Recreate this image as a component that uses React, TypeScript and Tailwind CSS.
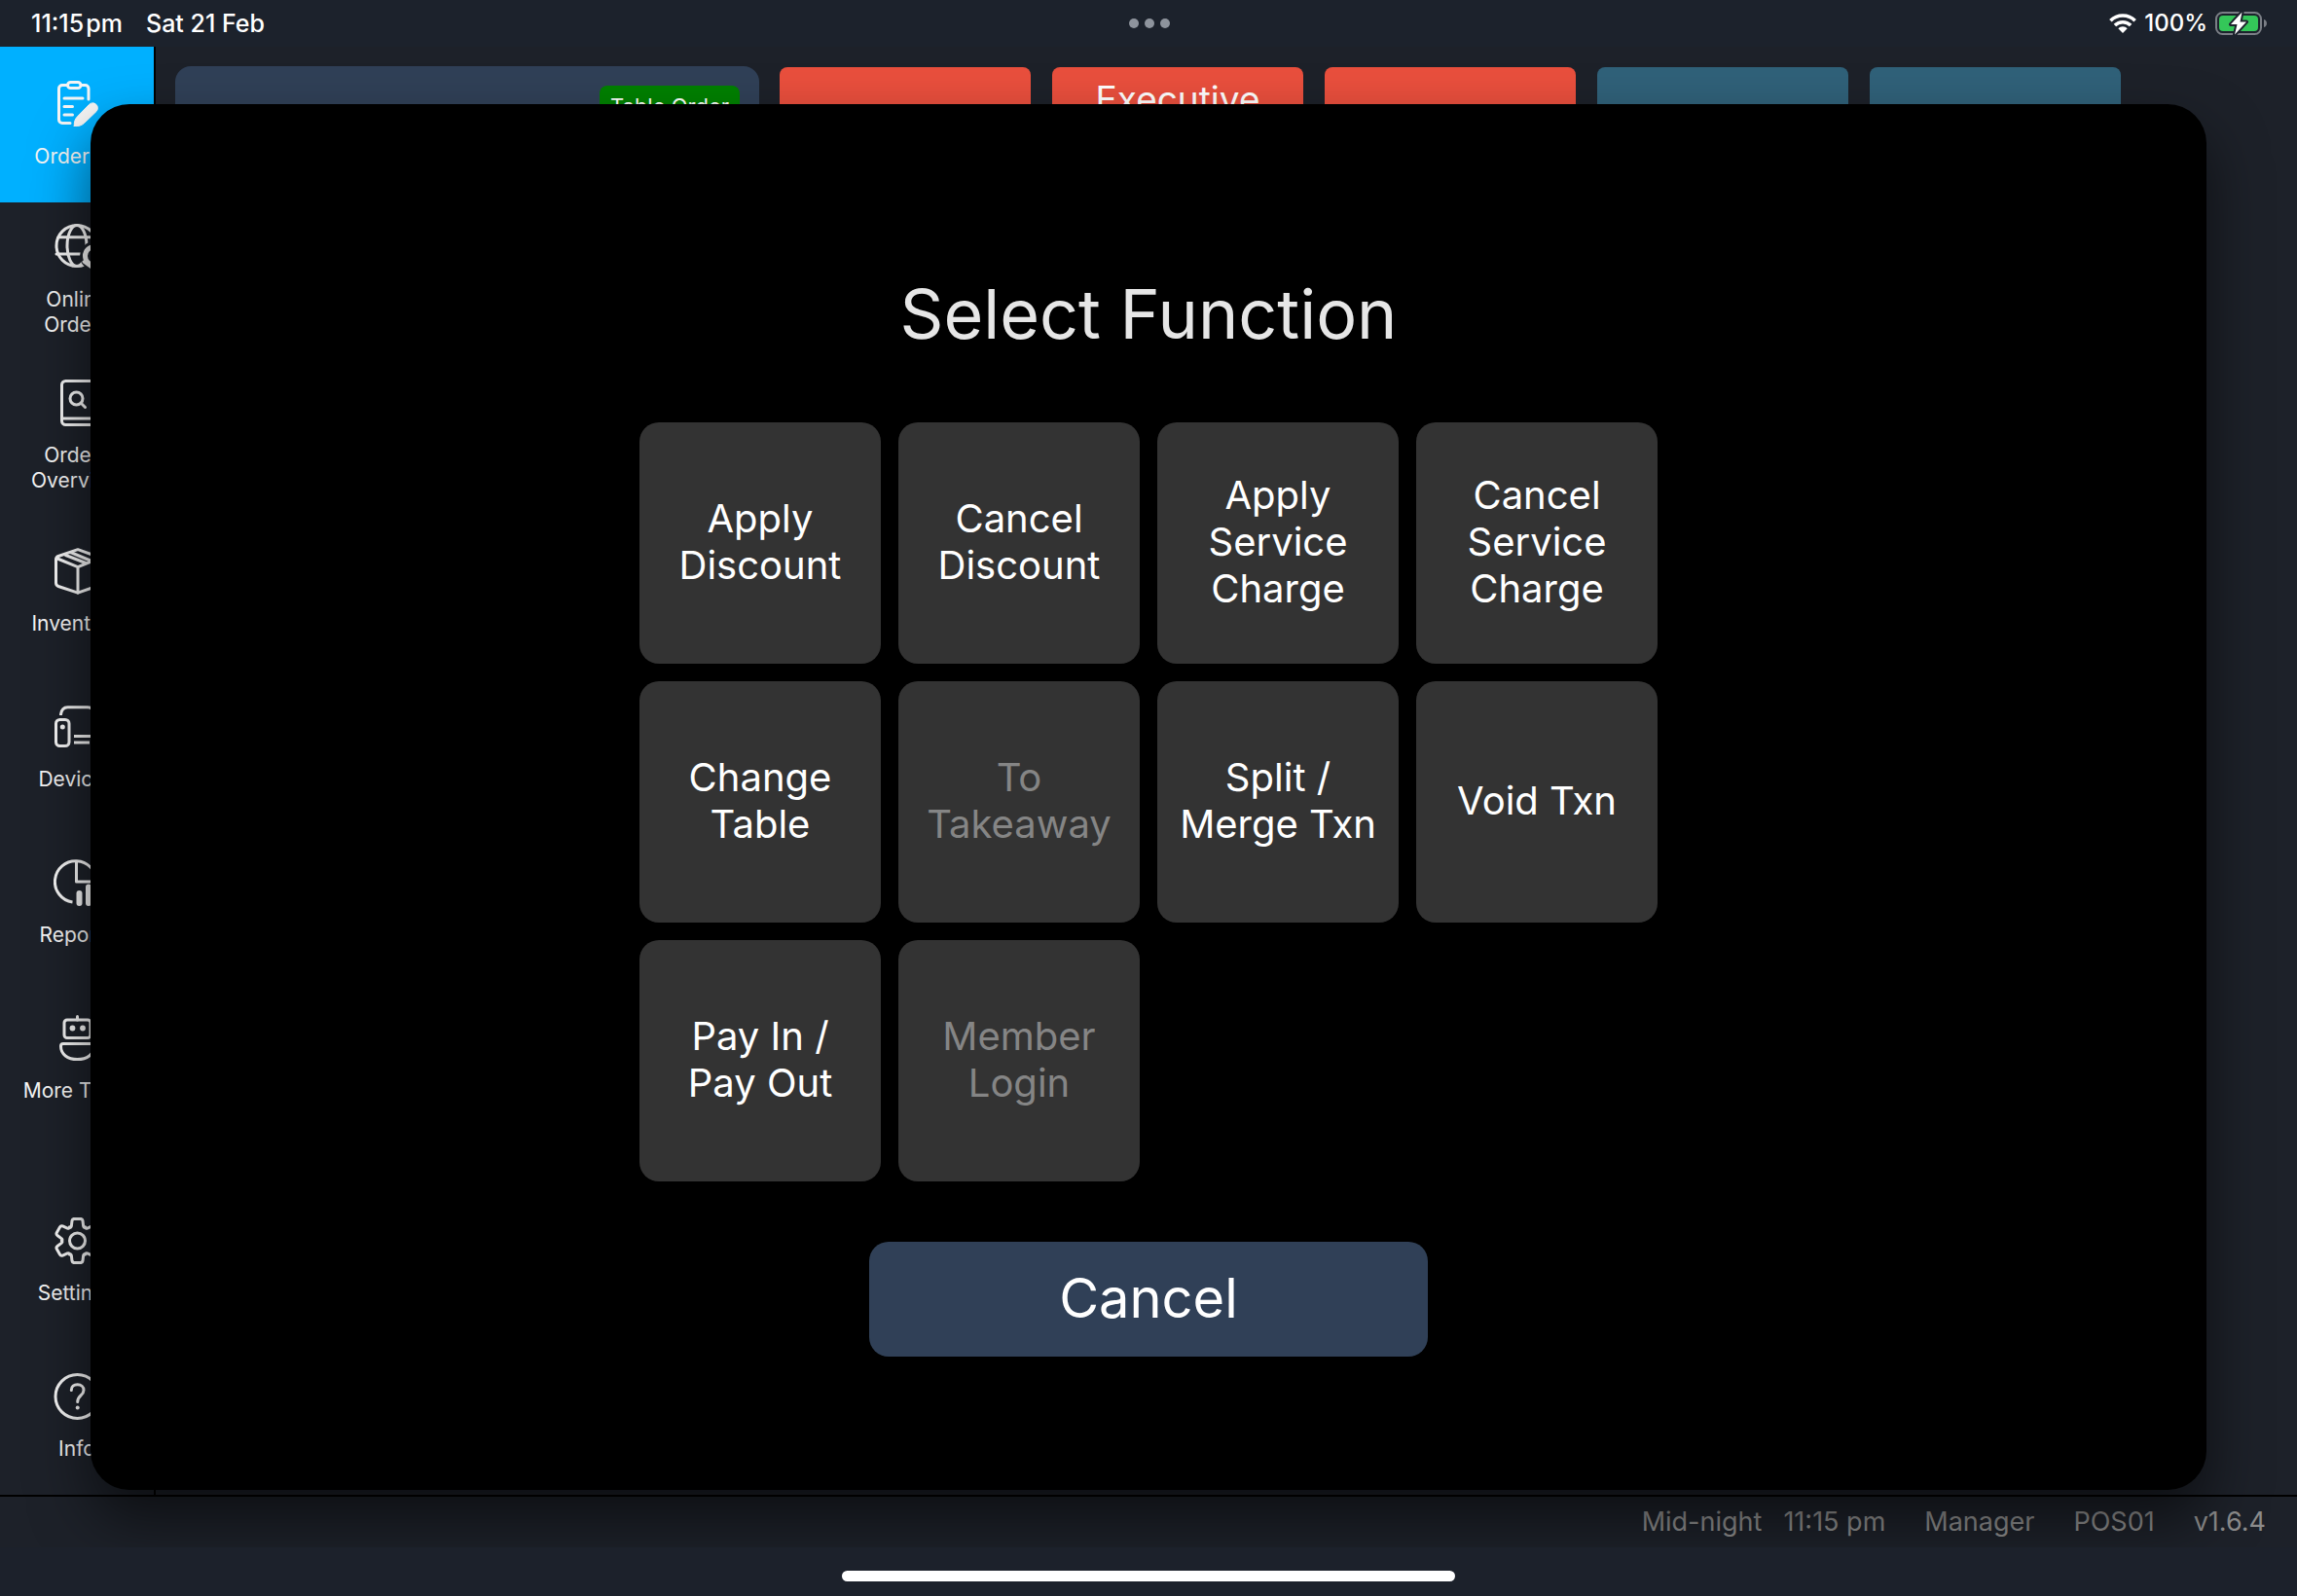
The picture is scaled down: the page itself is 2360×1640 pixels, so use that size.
import type { ReactNode } from 'react';

type NavItem = {
  lines: string[];
  icon: ReactNode;
  active?: boolean;
};

type PosFunction = {
  lines: string[];
  disabled?: boolean;
};

function Icon({ children }: { children: ReactNode }) {
  return (
    <svg
      className="h-12 w-12"
      viewBox="0 0 48 48"
      fill="none"
      stroke="currentColor"
      strokeWidth={3}
      strokeLinecap="round"
      strokeLinejoin="round"
      aria-hidden="true"
    >
      {children}
    </svg>
  );
}

const clipboardIcon = (
  <Icon>
    <path d="M14 4.5H9A3.5 3.5 0 0 0 5.5 8V40A3.5 3.5 0 0 0 9 43.5H17" />
    <path d="M28.5 4.5H32.5A3.5 3.5 0 0 1 36 8V19" />
    <rect x="14.5" y="1.5" width="13.5" height="6" rx="3" />
    <path d="M11 18H30M11 26.5H19.5M11 35H19.5" />
    <path
      d="M21.3 46.5C21 42.5 22 39.5 24.5 36.8L36.5 24.5A5 5 0 0 1 44 31.5L31.5 43.5C29 46 25.5 47 21.3 46.5Z"
      fill="currentColor"
      strokeWidth={1}
    />
  </Icon>
);

const globeIcon = (
  <Icon>
    <circle cx="24" cy="22.5" r="21" />
    <ellipse cx="24" cy="22.5" rx="10" ry="21" />
    <path d="M5 13.7H43M3 31H45" />
    <circle cx="42" cy="33" r="15" fill="#1d2129" stroke="none" />
    <circle cx="42" cy="33" r="9.5" strokeWidth={5} />
    <path d="M31 39L42 47L52 39" fill="currentColor" />
  </Icon>
);

const overviewIcon = (
  <Icon>
    <rect x="8.5" y="1.5" width="35" height="45" rx="4" />
    <path d="M9 40H43" />
    <circle cx="23.5" cy="19.5" r="6.5" />
    <path d="M28.5 24.5L32.5 28.5" />
  </Icon>
);

const boxIcon = (
  <Icon>
    <path d="M25 1.7L44 8.5Q46.5 9.5 46.5 12V36Q46.5 38.5 44 39.5L25 46.2L5 39.5Q2.5 38.5 2.5 36V12Q2.5 9.5 5 8.5Z" />
    <path d="M4 11L25 19.7L46 11M25 19.7V46" />
    <path d="M12.5 7.5L33 15.5M17.5 4.5L39 13.5" />
  </Icon>
);

const deviceIcon = (
  <Icon>
    <rect x="2.5" y="16.5" width="13.5" height="27" rx="4" />
    <circle cx="9.3" cy="24" r="2.5" fill="currentColor" stroke="none" />
    <path d="M7.5 12V11Q8.5 3.7 14.5 3.7H35Q41 3.7 41 9.7V33" strokeLinecap="butt" />
    <path d="M21 33.5H41M21 40H37" strokeLinecap="butt" />
  </Icon>
);

const reportIcon = (
  <Icon>
    <path d="M19.5 44A21.3 21.3 0 1 1 44 23" strokeLinecap="butt" />
    <path d="M23.5 3V23H43" />
    <rect x="23.5" y="32" width="6" height="16" rx="3" fill="currentColor" stroke="none" />
    <rect x="33" y="25.5" width="6" height="22.5" rx="3" fill="currentColor" stroke="none" />
    <rect x="42" y="29" width="6" height="19" rx="3" fill="currentColor" stroke="none" />
  </Icon>
);

const robotIcon = (
  <Icon>
    <path d="M24.5 1.5V5" />
    <rect x="11" y="5" width="27" height="18.5" rx="3" />
    <circle cx="19.5" cy="13.5" r="2.9" fill="currentColor" stroke="none" />
    <circle cx="30" cy="13.5" r="2.9" fill="currentColor" stroke="none" />
    <path d="M10 29.5H39Q41.5 29.5 41.5 32C41.5 40.5 34.5 45.5 24.5 45.5S7.5 40.5 7.5 32Q7.5 29.5 10 29.5Z" />
  </Icon>
);

// one tooth, repeated around the centre
const gearIcon = (
  <Icon>
    {[0, 60, 120, 180, 240, 300].map((angle) => (
      <path
        key={angle}
        transform={`rotate(${angle} 24.5 24)`}
        d="M16.5 10.1Q18 10.6 18.4 8.6L19 3.4Q19.4 1.4 21.4 1.4H27.6Q29.6 1.4 30 3.4L30.6 8.6Q31 10.6 32.5 10.1"
      />
    ))}
    <circle cx="24.5" cy="24" r="8" />
  </Icon>
);

const infoIcon = (
  <Icon>
    <circle cx="24.5" cy="24" r="22.5" />
    <path d="M18.3 17.5C18.3 13.8 21 11.8 24.6 11.8C28.3 11.8 31 14.2 31 17.5C31 23 24.7 23 24.7 29.5" />
    <circle cx="24.7" cy="35.5" r="2" fill="currentColor" stroke="none" />
  </Icon>
);

const mainNav: NavItem[] = [
  { lines: ['Ordering'], icon: clipboardIcon, active: true },
  { lines: ['Online', 'Orders'], icon: globeIcon },
  { lines: ['Orders', 'Overview'], icon: overviewIcon },
  { lines: ['Inventory'], icon: boxIcon },
  { lines: ['Devices'], icon: deviceIcon },
  { lines: ['Reports'], icon: reportIcon },
  { lines: ['More Tools'], icon: robotIcon },
];

const bottomNav: NavItem[] = [
  { lines: ['Settings'], icon: gearIcon },
  { lines: ['Info'], icon: infoIcon },
];

const functions: PosFunction[] = [
  { lines: ['Apply', 'Discount'] },
  { lines: ['Cancel', 'Discount'] },
  { lines: ['Apply', 'Service', 'Charge'] },
  { lines: ['Cancel', 'Service', 'Charge'] },
  { lines: ['Change', 'Table'] },
  { lines: ['To', 'Takeaway'], disabled: true },
  { lines: ['Split /', 'Merge Txn'] },
  { lines: ['Void Txn'] },
  { lines: ['Pay In /', 'Pay Out'] },
  { lines: ['Member', 'Login'], disabled: true },
];

function StatusBar() {
  return (
    <header className="relative z-20 grid h-12 shrink-0 grid-cols-3 items-center bg-[#1c222c] pr-[30px] pl-8 font-medium text-white">
      <div className="flex gap-6 pt-0.5 text-[25px]">
        <span>11:15&#8202;pm</span>
        <span>Sat 21 Feb</span>
      </div>
      <div className="flex justify-center gap-1.5">
        <span className="h-2.5 w-2.5 rounded-full bg-[#8e949d]" />
        <span className="h-2.5 w-2.5 rounded-full bg-[#8e949d]" />
        <span className="h-2.5 w-2.5 rounded-full bg-[#8e949d]" />
      </div>
      <div className="flex items-center justify-end gap-2 text-2xl">
        <svg className="h-5 w-7" viewBox="0 0 28 20" fill="none" stroke="white" strokeWidth={3.6} aria-hidden="true">
          <path d="M1.4 7.2A18 18 0 0 1 26.6 7.2" />
          <path d="M5.9 12A11.6 11.6 0 0 1 22.1 12" />
          <path d="M14 20L9.3 15.2A6.6 6.6 0 0 1 18.7 15.2Z" fill="white" stroke="none" />
        </svg>
        <span>100%</span>
        <svg className="h-6 w-[54px]" viewBox="0 0 54 24" aria-hidden="true">
          <rect x="1" y="1" width="46" height="22" rx="6.5" fill="none" stroke="#7b7f86" strokeWidth="2" />
          <path d="M50 8A4.2 4.2 0 0 1 50 16Z" fill="#7b7f86" />
          <rect x="4" y="4" width="40" height="16" rx="4" fill="#34c759" />
          <path
            d="M27.5 0.5L16 13H22.5L20 23.5L32 10.5H25.5Z"
            fill="white"
            stroke="#1c222c"
            strokeWidth="4"
            strokeLinejoin="round"
            paintOrder="stroke"
          />
        </svg>
      </div>
    </header>
  );
}

function NavButton({ item }: { item: NavItem }) {
  return (
    <button
      type="button"
      className={`flex h-40 w-full flex-col items-center justify-center gap-[17px] text-[21px] leading-[26px] text-[#f5f5f5] ${
        item.active ? 'bg-[#00b0ff]' : ''
      }`}
    >
      {item.icon}
      <span>
        {item.lines.map((line) => (
          <span key={line} className="block">
            {line}
          </span>
        ))}
      </span>
    </button>
  );
}

function Sidebar() {
  return (
    <nav className="flex w-40 shrink-0 flex-col justify-between border-r-2 border-black">
      <div>
        {mainNav.map((item) => (
          <NavButton key={item.lines.join(' ')} item={item} />
        ))}
      </div>
      <div>
        {bottomNav.map((item) => (
          <NavButton key={item.lines.join(' ')} item={item} />
        ))}
      </div>
    </nav>
  );
}

function OrderScreen() {
  return (
    <main className="flex flex-1 items-start gap-[21px] px-5 pt-5">
      <section className="flex h-60 w-[600px] shrink-0 justify-end rounded-2xl bg-[#304057] p-5">
        <span className="flex h-[42px] w-36 items-center justify-center rounded-lg bg-[#008000] text-[22px] text-white">
          Table Order
        </span>
      </section>
      <div className="grid grid-cols-[repeat(5,258px)] gap-[22px] pt-px text-center text-[37px] leading-[46px] text-white">
        <div className="h-36 rounded-lg bg-[#e94f3d]" />
        <div className="h-36 rounded-lg bg-[#e94f3d] pt-2.5">Executive</div>
        <div className="h-36 rounded-lg bg-[#e94f3d]" />
        <div className="h-36 rounded-lg bg-[#306179]" />
        <div className="h-36 rounded-lg bg-[#306179]" />
      </div>
    </main>
  );
}

function FunctionDialog() {
  return (
    <div
      role="dialog"
      aria-modal="true"
      aria-labelledby="function-title"
      className="absolute inset-x-[93px] top-[107px] bottom-[109px] z-10 flex flex-col items-center rounded-[40px] bg-black pt-[174px] shadow-[0_30px_60px_rgba(0,0,0,0.55)]"
    >
      <h1 id="function-title" className="text-[70px] leading-[84px] text-[#e6e6e6]">
        Select Function
      </h1>
      <div className="mt-[69px] grid grid-cols-[repeat(4,248px)] gap-[18px]">
        {functions.map((fn) => (
          <button
            key={fn.lines.join(' ')}
            type="button"
            disabled={fn.disabled}
            className="h-[248px] rounded-[20px] bg-[#333333] pb-0.5 text-[40px] leading-[48px] text-white disabled:text-[#858585]"
          >
            {fn.lines.map((line) => (
              <span key={line} className="block">
                {line}
              </span>
            ))}
          </button>
        ))}
      </div>
      <button
        type="button"
        className="mt-[62px] h-[118px] w-[574px] rounded-[20px] bg-[#304057] pb-0.5 text-[56px] leading-[68px] text-white"
      >
        Cancel
      </button>
    </div>
  );
}

function App() {
  return (
    <div className="relative flex min-h-screen flex-col overflow-hidden bg-[#1d2129] font-[Inter,sans-serif]">
      <StatusBar />
      <div className="flex flex-1">
        <Sidebar />
        <OrderScreen />
      </div>
      <footer className="flex h-[54px] shrink-0 items-center justify-end border-t-2 border-black px-8 text-[27px] text-[#8c8c8c]">
        <span>Mid-night</span>
        <span className="ml-[22px]">11:15 pm</span>
        <span className="ml-10">Manager</span>
        <span className="ml-10">POS01</span>
        <span className="ml-10">v1.6.4</span>
      </footer>
      <div className="relative z-20 flex h-[50px] shrink-0 justify-center bg-[#1c212b] pt-6">
        <div className="h-[11px] w-[630px] rounded-full bg-white" />
      </div>
      <FunctionDialog />
    </div>
  );
}

export default App;
